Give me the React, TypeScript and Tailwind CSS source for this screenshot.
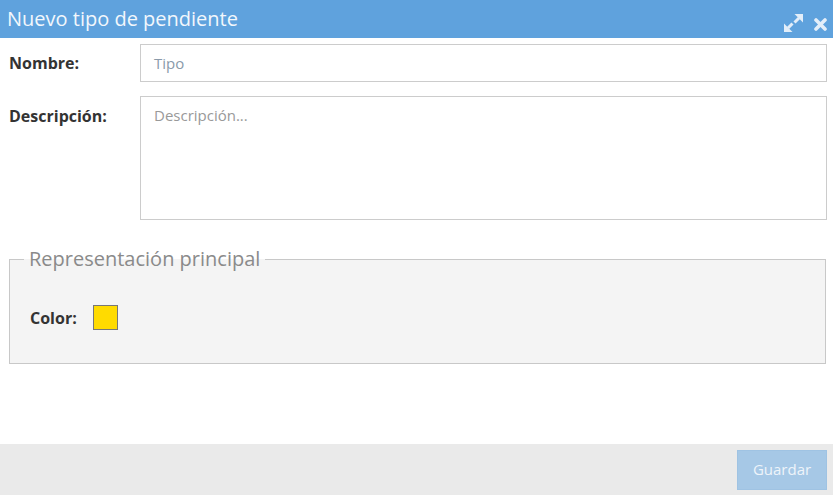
import React from "react";

function ExpandIcon() {
  return (
    <svg width="19" height="18" viewBox="0 0 19 18" fill="#e3eef9">
      <polygon points="10.5,0 19,0 19,8.5" />
      <polygon points="0,9.5 0,18 8.5,18" />
      <line x1="15" y1="4" x2="10.5" y2="8.5" stroke="#e3eef9" strokeWidth="3" />
      <line x1="4" y1="14" x2="8.5" y2="9.5" stroke="#e3eef9" strokeWidth="3" />
    </svg>
  );
}

function CloseIcon() {
  return (
    <svg width="13" height="13" viewBox="0 0 13 13">
      <line x1="2" y1="2" x2="11" y2="11" stroke="#e3eef9" strokeWidth="3.6" strokeLinecap="round" />
      <line x1="11" y1="2" x2="2" y2="11" stroke="#e3eef9" strokeWidth="3.6" strokeLinecap="round" />
    </svg>
  );
}

export default function App() {
  return (
    <div
      className="w-[833px] h-[495px] bg-white flex flex-col overflow-hidden"
      style={{ fontFamily: '"Open Sans", "Liberation Sans", sans-serif' }}
    >
      <div className="h-[38px] bg-[#5fa2dd] flex items-center pl-[7px] pr-[6px] shrink-0">
        <div className="text-[20px] text-[#f2f7fc] leading-none flex-1">Nuevo tipo de pendiente</div>
        <div className="flex items-start gap-[11px] mt-[8px]">
          <ExpandIcon />
          <div className="mt-[4px]">
            <CloseIcon />
          </div>
        </div>
      </div>

      <div className="flex-1 flex flex-col pl-[9px] pr-[6px] pt-[6px]">
        <div className="flex items-center">
          <label className="w-[131px] text-[16px] font-bold text-[#333]">Nombre:</label>
          <div className="flex-1 h-[38px] border border-[#ccc] flex items-center px-[13px] text-[15px] text-[#8a9aaa]">
            Tipo
          </div>
        </div>
        <div className="flex mt-[14px]">
          <label className="w-[131px] text-[16px] font-bold text-[#333] pt-[8px]">Descripción:</label>
          <div className="flex-1 h-[124px] border border-[#ccc] px-[13px] pt-[8px] text-[15px] text-[#999] leading-[20px]">
            Descripción...
          </div>
        </div>

        <fieldset className="mt-[26px] mr-[1px] h-[118px] border border-[#c8c8c8] bg-[#f4f4f4] px-[20px] pt-[0px]">
          <legend className="px-[5px] ml-[-6px] text-[20px] text-[#8a8a8a] leading-[26px]">
            Representación principal
          </legend>
          <div className="flex items-center mt-[33px]">
            <span className="text-[16px] font-bold text-[#333] w-[63px]">Color:</span>
            <div className="w-[25px] h-[25px] bg-[#ffdb00] border border-[#777]" />
          </div>
        </fieldset>
      </div>

      <div className="h-[51px] bg-[#eaeaea] flex items-center justify-end pr-[6px] shrink-0">
        <button className="w-[90px] h-[40px] bg-[#a6c8e6] text-[15px] text-[#eef4fa] border border-[#9fc3e3]">
          Guardar
        </button>
      </div>
    </div>
  );
}
